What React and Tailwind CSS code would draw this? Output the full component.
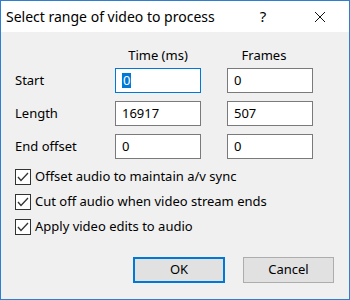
const font = { fontFamily: '"Segoe UI", "Noto Sans", Arial, sans-serif' };

const Field = ({ value, focused, selected }) => (
  <div
    className={`w-[86px] h-[25px] bg-white border flex items-center pl-[6px] text-[13px] text-black ${
      focused ? 'border-[#0078d7]' : 'border-[#7a7a7a]'
    }`}
  >
    {selected ? (
      <span className="bg-[#0078d7] text-white leading-[15px] px-[1px]">{value}</span>
    ) : (
      <span>{value}</span>
    )}
  </div>
);

const Check = ({ label }) => (
  <div className="h-[25px] flex items-center gap-[4px]">
    <div className="w-[16px] h-[16px] border border-[#333333] bg-white flex items-center justify-center">
      <svg width="14" height="14" viewBox="0 0 14 14" fill="none">
        <polyline points="2,7 5,10.5 12,3" stroke="#333333" strokeWidth="1.3" />
      </svg>
    </div>
    <span className="text-[13px] text-black">{label}</span>
  </div>
);

export default function App() {
  return (
    <div
      className="w-[350px] h-[300px] border border-[#2f7fd0] flex flex-col bg-[#f0f0f0] overflow-hidden"
      style={font}
    >
      {/* Title bar */}
      <div className="h-[31px] bg-white flex items-center pl-[5px] shrink-0">
        <span className="text-[14px] text-black flex-1">Select range of video to process</span>
        <span className="w-[28px] text-center text-[15px] text-black mr-[20px]">?</span>
        <div className="w-[46px] flex justify-center mr-[6px]">
          <svg width="12" height="12" viewBox="0 0 12 12">
            <path d="M1 1 L11 11 M11 1 L1 11" stroke="#111111" strokeWidth="1" />
          </svg>
        </div>
      </div>

      {/* Body */}
      <div className="flex-1 flex flex-col pt-[14px] pl-[14px] pr-[15px]">
        <div className="h-[20px] flex items-center text-[13px] text-black mb-[2px]">
          <div className="w-[100px]" />
          <div className="w-[86px] text-center">Time (ms)</div>
          <div className="w-[26px]" />
          <div className="w-[86px] text-center -ml-[6px]">Frames</div>
        </div>

        <div className="flex flex-col gap-[8px]">
          <div className="flex items-center">
            <span className="w-[100px] text-[13px] text-black">Start</span>
            <Field value="0" focused selected />
            <div className="w-[26px]" />
            <Field value="0" />
          </div>
          <div className="flex items-center">
            <span className="w-[100px] text-[13px] text-black">Length</span>
            <Field value="16917" />
            <div className="w-[26px]" />
            <Field value="507" />
          </div>
          <div className="flex items-center">
            <span className="w-[100px] text-[13px] text-black">End offset</span>
            <Field value="0" />
            <div className="w-[26px]" />
            <Field value="0" />
          </div>
        </div>

        <div className="flex flex-col mt-[5px]">
          <Check label="Offset audio to maintain a/v sync" />
          <Check label="Cut off audio when video stream ends" />
          <Check label="Apply video edits to audio" />
        </div>

        <div className="flex justify-end gap-[18px] mt-[18px]">
          <button className="w-[92px] h-[26px] bg-[#e1e1e1] border-2 border-[#0078d7] text-[13px] text-black">
            OK
          </button>
          <button className="w-[91px] h-[26px] bg-[#e1e1e1] border border-[#adadad] text-[13px] text-black">
            Cancel
          </button>
        </div>
      </div>
    </div>
  );
}
